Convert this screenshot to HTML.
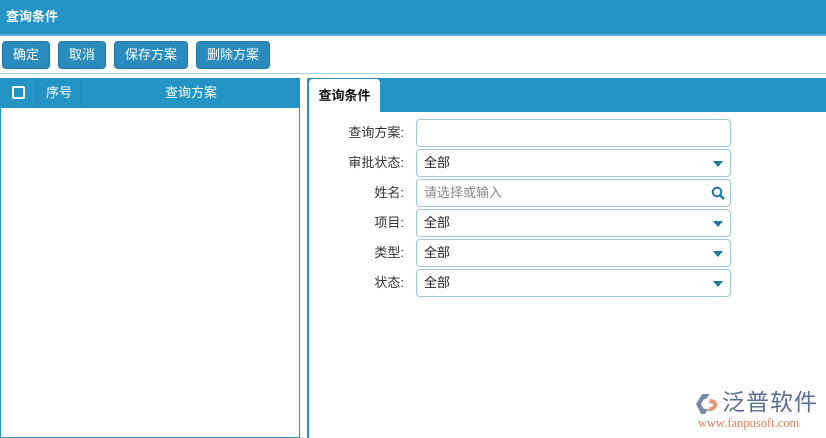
<!DOCTYPE html>
<html><head><meta charset="utf-8"><style>
*{box-sizing:border-box;margin:0;padding:0}
body{width:826px;height:436px;background:#fff;font-family:"Liberation Sans","Noto Sans CJK SC",sans-serif;font-size:13px;position:relative;overflow:hidden;color:#333}
.hdr{position:absolute;left:0;top:0;width:826px;height:34px;background:#2394c4;color:#fff;font-weight:bold;font-size:13px;line-height:33px;padding-left:6px}
.hl{position:absolute;left:0;top:34px;width:826px;height:2px;background:#5ab2d8}
.btn{position:absolute;top:41px;height:28px;background:#2a8bbd;border:1px solid #1f78a6;border-radius:4px;color:#fff;font-size:13px;line-height:26px;text-align:center}
.tl{position:absolute;left:0;top:73px;width:826px;height:1px;background:#a8d2e6}
.lp{position:absolute;left:0;top:78px;width:300px;height:360px;border:1px solid #2a95c5;border-top:none}
.lh{position:absolute;left:0;top:78px;width:300px;height:30px;background:#2394c4;color:#fff;line-height:29px}
.rp{position:absolute;left:307px;top:78px;width:519px;height:360px;border-left:2px solid #2a95c5}
.rh{position:absolute;left:307px;top:78px;width:519px;height:34px;background:#2394c4}
.tab{position:absolute;left:309px;top:79px;width:71px;height:34px;background:#fff;border-radius:4px 4px 0 0;font-weight:bold;color:#111;line-height:34px;text-align:center}
.lb{position:absolute;left:320px;width:84px;text-align:right;color:#333;font-size:13px;line-height:16px}
.in{position:absolute;left:416px;width:315px;height:28px;border:1px solid #9cc6e2;border-radius:4px;line-height:26px;padding-left:7px;color:#222}
.tri{position:absolute;right:7px;top:11px;width:0;height:0;border-left:5px solid transparent;border-right:5px solid transparent;border-top:6px solid #1c77a8}
</style></head><body>
<div class="hdr">查询条件</div><div class="hl"></div>
<div class="btn" style="left:2px;width:48px">确定</div>
<div class="btn" style="left:58px;width:48px">取消</div>
<div class="btn" style="left:114px;width:74px">保存方案</div>
<div class="btn" style="left:196px;width:74px">删除方案</div>
<div class="tl"></div>
<div class="lp"></div>
<div class="lh">
<div style="position:absolute;left:12px;top:8px;width:13px;height:13px;border:2px solid #fff;border-radius:2px"></div>
<div style="position:absolute;left:36px;top:0;width:46px;height:30px;border-left:1px solid #1e86b5;border-right:1px solid #1e86b5;text-align:center">序号</div>
<div style="position:absolute;left:82px;width:218px;text-align:center">查询方案</div>
</div>
<div class="rp"></div><div class="rh"></div>
<div class="tab">查询条件</div>
<div class="lb" style="top:125px">查询方案:</div><div class="in" style="top:119px"></div>
<div class="lb" style="top:155px">审批状态:</div><div class="in" style="top:149px">全部<div class="tri"></div></div>
<div class="lb" style="top:185px">姓名:</div><div class="in" style="top:179px;color:#888">请选择或输入
<svg style="position:absolute;right:5px;top:6px" width="14" height="14" viewBox="0 0 14 14"><circle cx="6" cy="6" r="4.3" fill="none" stroke="#1c77a8" stroke-width="2"/><path d="M9 9l4 4" stroke="#1c77a8" stroke-width="2.4"/></svg></div>
<div class="lb" style="top:215px">项目:</div><div class="in" style="top:209px">全部<div class="tri"></div></div>
<div class="lb" style="top:245px">类型:</div><div class="in" style="top:239px">全部<div class="tri"></div></div>
<div class="lb" style="top:275px">状态:</div><div class="in" style="top:269px">全部<div class="tri"></div></div>
<svg style="position:absolute;left:696px;top:392px" width="24" height="24" viewBox="0 0 24 24"><path d="M6 2h8l-4 5H8l-3 5 3 5h4l-3 5H5L0 12z" fill="#7a8aa8"/><path d="M14 7c5 0 8 3 7 7-1 4-6 6-10 5l3-4c2 0 3-1 3-2s-1-2-4-2z" fill="#e49a7a"/></svg>
<div style="position:absolute;left:722px;top:389px;font-size:23px;color:#5a6f95;letter-spacing:1px;line-height:26px">泛普软件</div>
<div style="position:absolute;left:698px;top:416px;font-family:'Liberation Serif',serif;font-size:12.5px;color:#d9805e;line-height:14px">www.fanpusoft.com</div>
</body></html>
